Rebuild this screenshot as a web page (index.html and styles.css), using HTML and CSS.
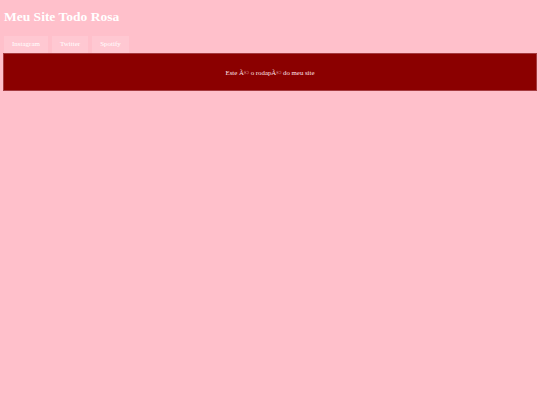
FILE: index.html
```html
<!DOCTYPE html>
<html lang="pt">
<head>
<meta charset="utf-8">
<title>Meu Site Todo Rosa</title>
<link rel="stylesheet" href="styles.css">
</head>
<body>
<header class="site-header">
  <h1 class="site-title">Meu Site Todo Rosa</h1>
  <nav class="site-nav">
    <a class="nav-link" href="#">Instagram</a>
    <a class="nav-link" href="#">Twitter</a>
    <a class="nav-link" href="#">Spotify</a>
  </nav>
</header>
<footer class="site-footer">
  <p class="footer-text">Este Ã© o rodapÃ© do meu site</p>
</footer>
</body>
</html>
```
FILE: styles.css
```css
html, body {
  margin: 0;
  padding: 0;
}
body {
  background: #ffc0cb;
  font-family: "Liberation Serif", "Times New Roman", serif;
  color: #ffffff;
  padding: 3px;
}
.site-header {
  padding: 0 1px;
}
.site-title {
  margin: 0;
  padding-top: 4px;
  font-size: 13.5px;
  font-weight: bold;
  line-height: 19px;
  color: #ffffff;
}
.site-nav {
  display: flex;
  gap: 4px;
  margin-top: 10px;
}
.nav-link {
  display: block;
  background: #ffc8d2;
  color: #ffffff;
  text-decoration: none;
  font-size: 7px;
  line-height: 16px;
  padding: 0 8px 1px;
}
.site-footer {
  background: #8b0000;
  border: 1px solid #a53a3f;
  height: 36px;
  display: flex;
  align-items: center;
  justify-content: center;
}
.footer-text {
  margin: 0;
  font-size: 6.8px;
  color: #ffe4e8;
}
```
